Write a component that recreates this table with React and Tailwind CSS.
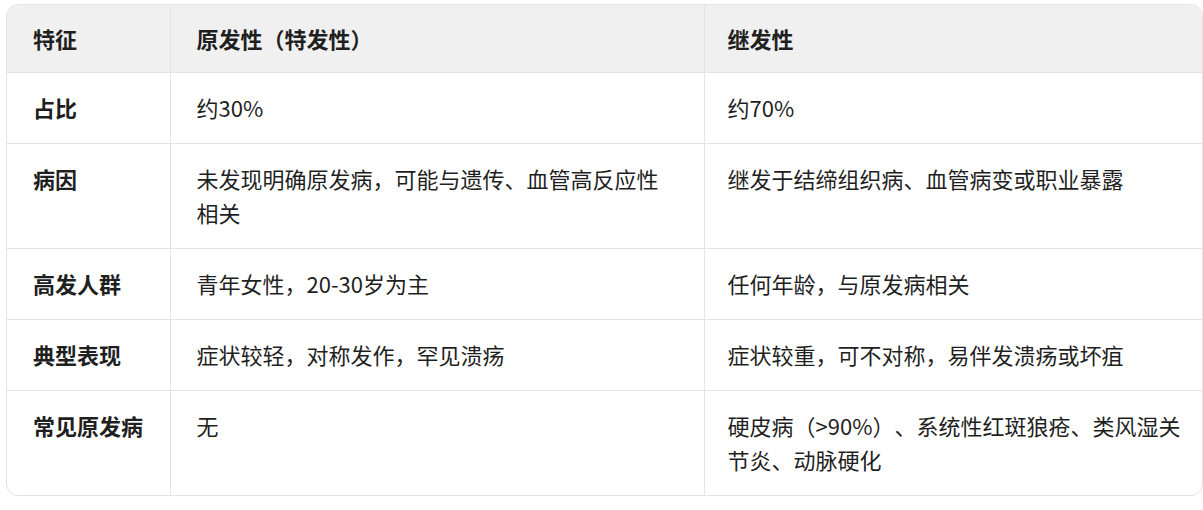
const rows = [
  { label: "占比", primary: "约30%", secondary: "约70%" },
  {
    label: "病因",
    primary: "未发现明确原发病，可能与遗传、血管高反应性相关",
    secondary: "继发于结缔组织病、血管病变或职业暴露",
  },
  { label: "高发人群", primary: "青年女性，20-30岁为主", secondary: "任何年龄，与原发病相关" },
  { label: "典型表现", primary: "症状较轻，对称发作，罕见溃疡", secondary: "症状较重，可不对称，易伴发溃疡或坏疽" },
  { label: "常见原发病", primary: "无", secondary: "硬皮病（>90%）、系统性红斑狼疮、类风湿关节炎、动脉硬化" },
];

export default function App() {
  return (
    <div
      className="min-h-screen bg-white pt-[4px] pl-[6px] text-[#1f1f1f] [text-spacing-trim:space-all]"
      style={{ fontFamily: '"Noto Sans CJK SC", "Noto Sans", sans-serif' }}
    >
      <div className="w-[1197px] overflow-hidden rounded-[12px] border border-[#e3e3e3]">
        <table className="w-full table-fixed border-collapse text-[22px] leading-[34px]">
          <colgroup>
            <col className="w-[163px]" />
            <col className="w-[534px]" />
            <col />
          </colgroup>
          <thead>
            <tr className="bg-[#f0f0f0]">
              <th className="h-[67px] px-[26px] text-left align-middle font-semibold">特征</th>
              <th className="border-l border-[#e3e3e3] px-[26px] text-left align-middle font-semibold">原发性（特发性）</th>
              <th className="border-l border-[#e3e3e3] pl-[23px] pr-[8px] text-left align-middle font-semibold">继发性</th>
            </tr>
          </thead>
          <tbody>
            {rows.map((row) => (
              <tr key={row.label} className="border-t border-[#e3e3e3]">
                <td className="px-[26px] pt-[17px] pb-[19px] align-top font-semibold">{row.label}</td>
                <td className="border-l border-[#e3e3e3] px-[26px] pt-[17px] pb-[19px] align-top">{row.primary}</td>
                <td className="border-l border-[#e3e3e3] pl-[23px] pr-[8px] pt-[17px] pb-[19px] align-top">{row.secondary}</td>
              </tr>
            ))}
          </tbody>
        </table>
      </div>
    </div>
  );
}
